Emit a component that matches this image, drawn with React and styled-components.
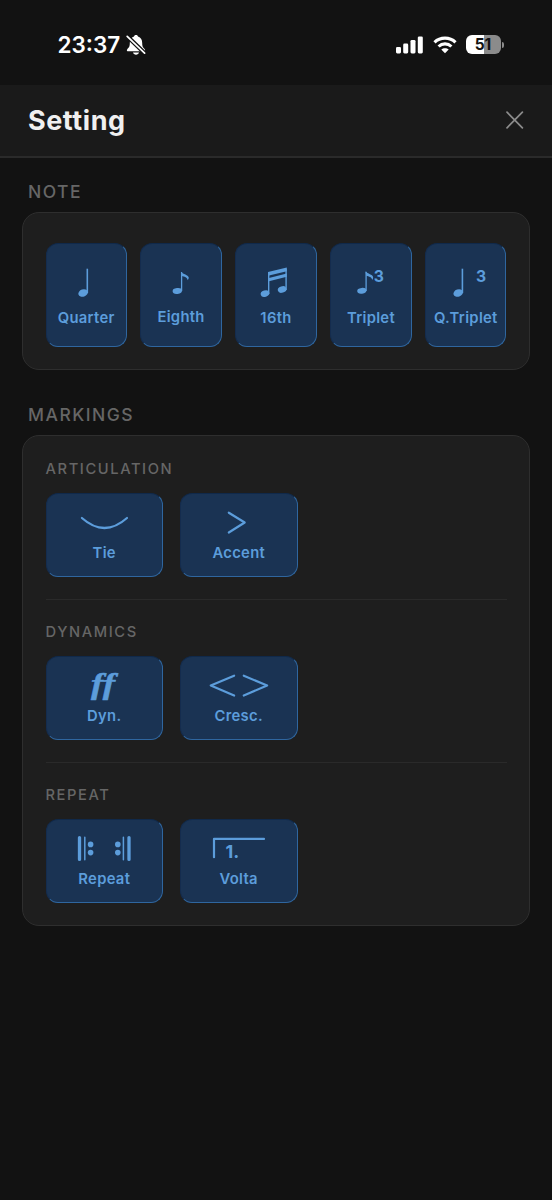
import React from 'react'
import styled, { createGlobalStyle } from 'styled-components'

const GlobalStyle = createGlobalStyle`
    * {
        box-sizing: border-box;
    }
    body {
        margin: 0;
        background: #121212;
        font-family: Inter, 'Liberation Sans', sans-serif;
    }
`

const Head = ({ x, y, rx = 4.9, ry = 3.6, tilt = -18 }) => (
    <ellipse
        cx={x}
        cy={y}
        rx={rx}
        ry={ry}
        fill="currentColor"
        stroke="none"
        transform={`rotate(${tilt} ${x} ${y})`}
    />
)

const QuarterIcon = () => (
    <NoteSvg viewBox="0 0 60 36">
        <Head x={27.1} y={28} />
        <path d="M31.3 3.7V28" strokeWidth="1.6" />
    </NoteSvg>
)

const EighthIcon = () => (
    <NoteSvg viewBox="0 0 60 36">
        <Head x={26.3} y={26} rx={4.7} ry={2.9} tilt={-6} />
        <path d="M30.6 7V26" strokeWidth="1.3" />
        <path
            d="M30 6.9C32.3 9.3 37.1 9.6 37.7 12.3C37.9 13.5 37.3 14.5 36.6 15.2C36.6 12.5 33.3 11.7 30.7 11.1Z"
            fill="currentColor"
            stroke="none"
        />
    </NoteSvg>
)

const SixteenthIcon = () => (
    <NoteSvg viewBox="0 0 60 36">
        <Head x={19} y={28.6} rx={4.4} ry={3.2} />
        <Head x={36.1} y={24.5} rx={4.4} ry={3.2} />
        <path d="M22.7 7.7V29M40.1 3.7V25" strokeWidth="1.4" />
        <path
            d="M22 7.1L40.8 2.5V6.2L22 10.8ZM22 13.2L40.8 8.6V11.8L22 16.4Z"
            fill="currentColor"
            stroke="none"
        />
    </NoteSvg>
)

const TripletIcon = () => (
    <NoteSvg viewBox="0 0 60 36">
        <Head x={20.8} y={25.8} rx={4.6} ry={2.9} tilt={-6} />
        <path d="M25.1 6.7V26" strokeWidth="1.3" />
        <path
            d="M24.5 6.5C26.8 8.9 31.5 9.3 32.1 12C32.3 13.2 31.8 14.2 31.1 14.9C31.1 12.2 27.8 11.3 25.2 10.7Z"
            fill="currentColor"
            stroke="none"
        />
        <Numeral x="32.7" y="16.6" $size="15.7px">
            3
        </Numeral>
    </NoteSvg>
)

const QTripletIcon = () => (
    <NoteSvg viewBox="0 0 60 36">
        <Head x={22.2} y={28} />
        <path d="M26.4 3.7V28" strokeWidth="1.6" />
        <Numeral x="39.9" y="16.6" $size="15.7px">
            3
        </Numeral>
    </NoteSvg>
)

const TieIcon = () => (
    <MarkSvg viewBox="0 0 80 34">
        <path d="M17.9 12Q40.4 32 63 12" />
    </MarkSvg>
)

const AccentIcon = () => (
    <MarkSvg viewBox="0 0 80 34">
        <path d="M29.8 6.7L45.7 16.5L29.8 26.5" />
    </MarkSvg>
)

// fortissimo, stretched to the width of an engraved dynamic mark
const DynIcon = () => (
    <MarkSvg viewBox="0 0 80 34">
        <Forte x="27" y="24.6" textLength="24" lengthAdjust="spacingAndGlyphs">
            ff
        </Forte>
    </MarkSvg>
)

const CrescIcon = () => (
    <MarkSvg viewBox="0 0 80 34">
        <path d="M35.1 6.7L11.8 16.5L35.1 26.5M44.8 6.7L68.1 16.5L44.8 26.5" />
    </MarkSvg>
)

const RepeatIcon = () => (
    <MarkSvg viewBox="0 0 80 34">
        <path d="M15.5 5.6V27.4M65 5.6V27.4" strokeWidth="3.3" />
        <path d="M20.8 5.2V27.8M59.4 5.2V27.8" strokeWidth="1.5" />
        <g fill="currentColor" stroke="none">
            <circle cx="26.6" cy="12.4" r="2.8" />
            <circle cx="26.6" cy="20.6" r="2.8" />
            <circle cx="53.8" cy="12.4" r="2.8" />
            <circle cx="53.8" cy="20.6" r="2.8" />
        </g>
    </MarkSvg>
)

const VoltaIcon = () => (
    <MarkSvg viewBox="0 0 80 34">
        <path d="M15 25.2V6.9H65" />
        <Numeral x="26.4" y="26.3" $size="18px">
            1.
        </Numeral>
    </MarkSvg>
)

const notes = [
    { name: 'Quarter', icon: <QuarterIcon />, gap: '8px' },
    { name: 'Eighth', icon: <EighthIcon />, gap: '7px' },
    { name: '16th', icon: <SixteenthIcon />, gap: '8px' },
    { name: 'Triplet', icon: <TripletIcon />, gap: '8px' },
    { name: 'Q.Triplet', icon: <QTripletIcon />, gap: '8px' },
]

const markings = [
    {
        title: 'ARTICULATION',
        items: [
            { name: 'Tie', icon: <TieIcon /> },
            { name: 'Accent', icon: <AccentIcon /> },
        ],
    },
    {
        title: 'DYNAMICS',
        items: [
            { name: 'Dyn.', icon: <DynIcon /> },
            { name: 'Cresc.', icon: <CrescIcon /> },
        ],
    },
    {
        title: 'REPEAT',
        items: [
            { name: 'Repeat', icon: <RepeatIcon /> },
            { name: 'Volta', icon: <VoltaIcon /> },
        ],
    },
]

const StatusBar = () => (
    <StatusWrap>
        <Clock>23:37</Clock>
        <BellSvg viewBox="0 0 20 22">
            <path
                d="M10 1C8.8 1 8.1 1.7 8 2.6C5 3.5 3.8 6 3.8 9C3.8 12.7 2.8 13.6 1.3 15.2C0.4 16.3 0.9 17.3 2.2 17.3H17.8C19.1 17.3 19.6 16.3 18.7 15.2C17.2 13.6 16.2 12.7 16.2 9C16.2 6 15 3.5 12 2.6C11.9 1.7 11.2 1 10 1Z"
                fill="#fff"
            />
            <path d="M7 18.6H13C12.6 20 11.5 20.7 10 20.7C8.5 20.7 7.4 20 7 18.6Z" fill="#fff" />
            <path d="M0.5 1.5L19.5 20" stroke="#121212" strokeWidth="4.2" />
            <path
                d="M1.2 2.3L18.6 19.2"
                stroke="#fff"
                strokeWidth="1.7"
                strokeLinecap="round"
            />
        </BellSvg>
        <Spacer />
        <SignalSvg viewBox="0 0 28 18" fill="#fff">
            <rect x="0" y="11" width="5" height="6.4" rx="1.3" />
            <rect x="7.2" y="7.6" width="5" height="9.8" rx="1.3" />
            <rect x="14.5" y="4" width="5" height="13.4" rx="1.3" />
            <rect x="21.8" y="0.4" width="5" height="17" rx="1.3" />
        </SignalSvg>
        <WifiSvg viewBox="0 0 24 18" fill="none" stroke="#fff" strokeWidth="3.1">
            <path d="M1.5 6.3C7.2 0.7 16.8 0.7 22.5 6.3" />
            <path d="M5.6 10.5C9.2 7 14.8 7 18.4 10.5" />
            <path
                d="M12 17.3L8.3 13.5C10.3 11.7 13.7 11.7 15.7 13.5Z"
                fill="#fff"
                stroke="none"
            />
        </WifiSvg>
        <Battery>51</Battery>
        <BatteryTip />
    </StatusWrap>
)

const App = () => {
    return (
        <Screen>
            <GlobalStyle />
            <StatusBar />
            <Header>
                <Title>Setting</Title>
                <CloseButton aria-label="Close">
                    <svg width="18" height="18" viewBox="0 0 18 18">
                        <path
                            d="M1 1.2L16.4 16.8M16.4 1.2L1 16.8"
                            stroke="#8c8c8c"
                            strokeWidth="1.7"
                            strokeLinecap="round"
                        />
                    </svg>
                </CloseButton>
            </Header>
            <Content>
                <SectionTitle>NOTE</SectionTitle>
                <NoteCard>
                    {notes.map((note) => (
                        <NoteKey key={note.name}>
                            {note.icon}
                            <KeyLabel $gap={note.gap}>{note.name}</KeyLabel>
                        </NoteKey>
                    ))}
                </NoteCard>
                <SectionTitle>MARKINGS</SectionTitle>
                <Card>
                    {markings.map((group) => (
                        <Group key={group.title}>
                            <GroupTitle>{group.title}</GroupTitle>
                            <GroupRow>
                                {group.items.map((item) => (
                                    <MarkKey key={item.name}>
                                        {item.icon}
                                        <KeyLabel $gap="4px">
                                            {item.name}
                                        </KeyLabel>
                                    </MarkKey>
                                ))}
                            </GroupRow>
                        </Group>
                    ))}
                </Card>
            </Content>
        </Screen>
    )
}

const Screen = styled.div`
    width: 552px;
    height: 1200px;
    overflow: hidden;
    background: #121212;
`

const StatusWrap = styled.div`
    display: flex;
    align-items: center;
    height: 85px;
    padding: 4px 48.5px 0 57.5px;
`
const Clock = styled.span`
    width: 68px;
    color: #fff;
    font-size: 22.5px;
    font-weight: 600;
    line-height: 28px;
`
const Spacer = styled.div`
    flex: 1;
`
const BellSvg = styled.svg`
    width: 20px;
    height: 22px;
`
const SignalSvg = styled.svg`
    width: 28px;
    height: 18px;
    margin-right: 9px;
`
const WifiSvg = styled.svg`
    width: 24px;
    height: 18px;
    margin-right: 9px;
`
const Battery = styled.div`
    width: 35px;
    height: 19px;
    border-radius: 6px;
    background: linear-gradient(to right, #fff 51%, #8b8b8b 51%);
    color: #121212;
    font-size: 15.5px;
    font-weight: 700;
    line-height: 19px;
    text-align: center;
`
const BatteryTip = styled.div`
    width: 2px;
    height: 6px;
    margin-left: 1px;
    border-radius: 0 3px 3px 0;
    background: #8b8b8b;
`

const Header = styled.header`
    display: flex;
    align-items: center;
    justify-content: space-between;
    height: 73px;
    padding: 0 28px;
    background: #1a1a1a;
    border-bottom: 2px solid #2a2a2a;
`
const Title = styled.h1`
    margin: 0;
    color: #f0f0f0;
    font-size: 27px;
    font-weight: 700;
    line-height: 32px;
    letter-spacing: 0.55px;
`
const CloseButton = styled.button`
    display: flex;
    margin: 0 0 2px;
    padding: 0;
    border: none;
    background: none;
`

const Content = styled.main`
    padding: 23px 22px 0;
`
const SectionTitle = styled.h2`
    margin: 0 0 9px 6px;
    color: #666;
    font-size: 17.5px;
    font-weight: 500;
    line-height: 22px;
    letter-spacing: 1.5px;
`
const Card = styled.section`
    padding: 0 22.5px;
    border: 1px solid #2e2e2e;
    border-radius: 17px;
    background: #1e1e1e;
`
const NoteCard = styled(Card)`
    display: grid;
    grid-template-columns: repeat(5, 1fr);
    gap: 13.6px;
    height: 158px;
    margin-bottom: 34px;
    padding-top: 30px;
`
const Key = styled.button`
    display: flex;
    flex-direction: column;
    align-items: center;
    border: 1px solid;
    border-color: #10294a #2f669f #2f669f #142c4e;
    border-radius: 12px;
    background: #1a3353;
    color: #5c9ddb;
    font-family: inherit;
`
const NoteKey = styled(Key)`
    height: 104px;
    padding: 21px 0 0;
`
const MarkKey = styled(Key)`
    width: 117.5px;
    height: 84px;
    padding: 12px 0 0;
`
const KeyLabel = styled.span`
    margin-top: ${({ $gap }) => $gap};
    font-size: 14.8px;
    font-weight: 600;
    line-height: 18px;
    letter-spacing: 0.3px;
`

const Group = styled.div`
    height: 163px;
    padding-top: 22px;

    &:first-child {
        padding-top: 23px;
    }
    & + & {
        border-top: 1px solid #2a2a2a;
    }
`
const GroupTitle = styled.h3`
    margin: 0 0 14px;
    color: #666;
    font-size: 14.7px;
    font-weight: 500;
    line-height: 20px;
    letter-spacing: 1.6px;
`
const GroupRow = styled.div`
    display: flex;
    gap: 17px;
`

const NoteSvg = styled.svg`
    flex: none;
    width: 60px;
    height: 36px;
    fill: none;
    stroke: currentColor;
`
const MarkSvg = styled.svg`
    flex: none;
    width: 80px;
    height: 34px;
    overflow: visible;
    fill: none;
    stroke: currentColor;
    stroke-width: 2.2;
    stroke-linecap: round;
    stroke-linejoin: round;
`
const Numeral = styled.text`
    fill: currentColor;
    stroke: none;
    font-size: ${({ $size }) => $size};
    font-weight: 700;
`
const Forte = styled.text`
    fill: currentColor;
    stroke-width: 0.5;
    font-family: 'Liberation Serif', serif;
    font-size: 29px;
    font-style: italic;
    font-weight: 700;
`

export default App
